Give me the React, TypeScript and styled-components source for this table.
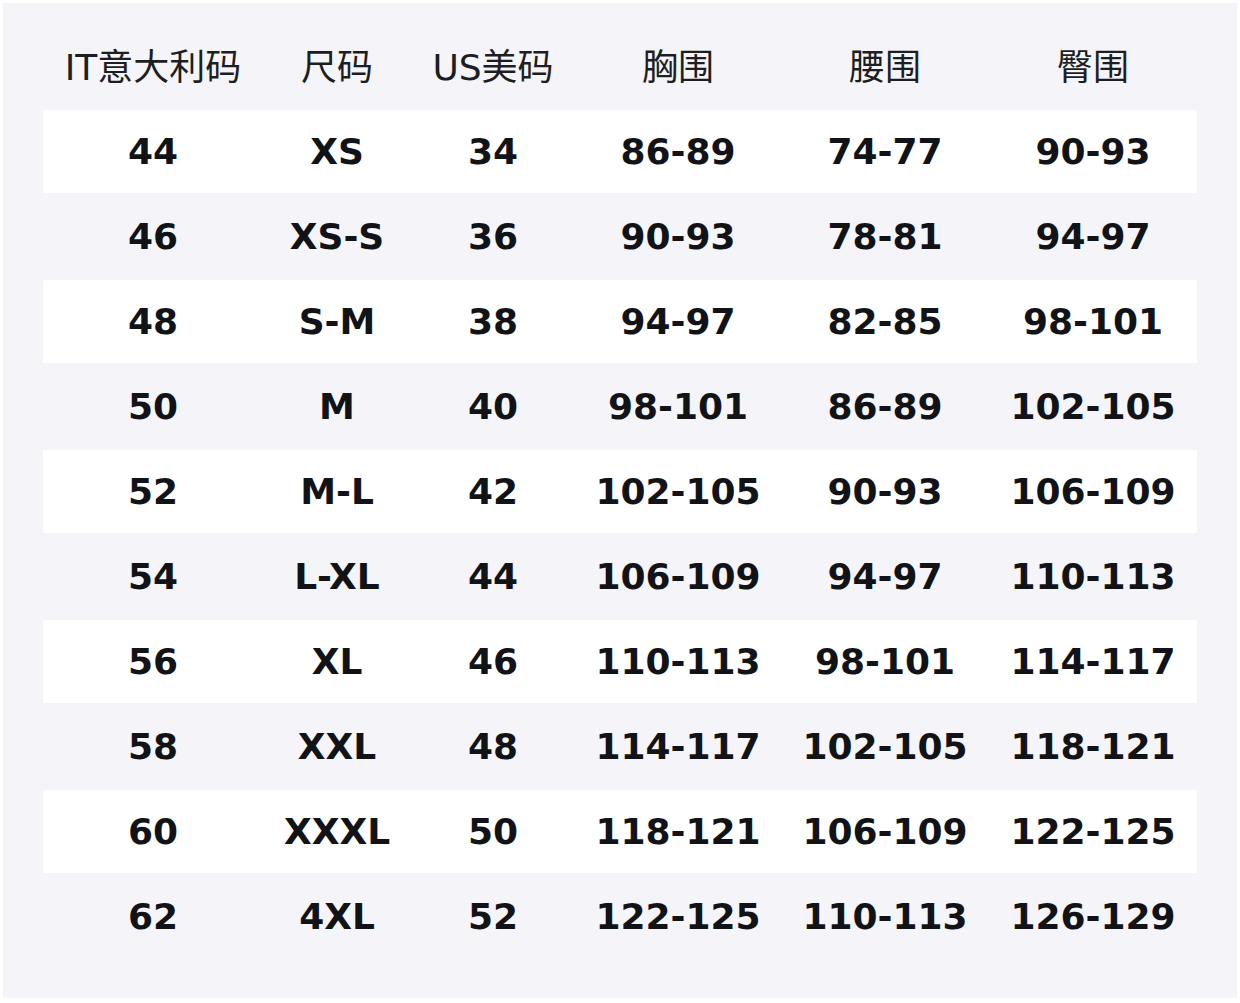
import styled, { createGlobalStyle } from "styled-components";

const GlobalStyle = createGlobalStyle`
  html, body {
    margin: 0;
    padding: 0;
    background: #ffffff;
  }
  body {
    font-family: "DejaVu Sans", "Noto Sans CJK SC", sans-serif;
    color: #15161a;
  }
`;

const Panel = styled.div`
  margin: 3px;
  width: 1234px;
  height: 995px;
  box-sizing: border-box;
  padding: 21px 40px 0 40px;
  background: #f4f4f9;
`;

const Row = styled.div<{ $white?: boolean }>`
  display: grid;
  grid-template-columns: 220px 148px 164px 206px 208px 208px;
  height: 85px;
  align-items: center;
  background: ${(p) => (p.$white ? "#ffffff" : "transparent")};
  border-radius: 2px;
  box-sizing: border-box;
  ${(p) => (p.$white ? "border-top: 1px solid #f4f4f9; border-bottom: 1px solid #f4f4f9;" : "")}
`;

const HeadCell = styled.div`
  text-align: center;
  font-size: 36px;
  font-weight: 400;
  color: #1d1e22;
  margin-top: -5px;
`;

const Cell = styled.div`
  text-align: center;
  font-size: 36px;
  font-weight: 700;
  color: #121317;
`;

const headers = ["IT意大利码", "尺码", "US美码", "胸围", "腰围", "臀围"];

const rows = [
  ["44", "XS", "34", "86-89", "74-77", "90-93"],
  ["46", "XS-S", "36", "90-93", "78-81", "94-97"],
  ["48", "S-M", "38", "94-97", "82-85", "98-101"],
  ["50", "M", "40", "98-101", "86-89", "102-105"],
  ["52", "M-L", "42", "102-105", "90-93", "106-109"],
  ["54", "L-XL", "44", "106-109", "94-97", "110-113"],
  ["56", "XL", "46", "110-113", "98-101", "114-117"],
  ["58", "XXL", "48", "114-117", "102-105", "118-121"],
  ["60", "XXXL", "50", "118-121", "106-109", "122-125"],
  ["62", "4XL", "52", "122-125", "110-113", "126-129"],
];

function App() {
  return (
    <>
      <GlobalStyle />
      <Panel>
        <Row>
          {headers.map((h) => (
            <HeadCell key={h}>{h}</HeadCell>
          ))}
        </Row>
        {rows.map((r, i) => (
          <Row key={r[0]} $white={i % 2 === 0}>
            {r.map((c, j) => (
              <Cell key={j}>{c}</Cell>
            ))}
          </Row>
        ))}
      </Panel>
    </>
  );
}

export default App;
